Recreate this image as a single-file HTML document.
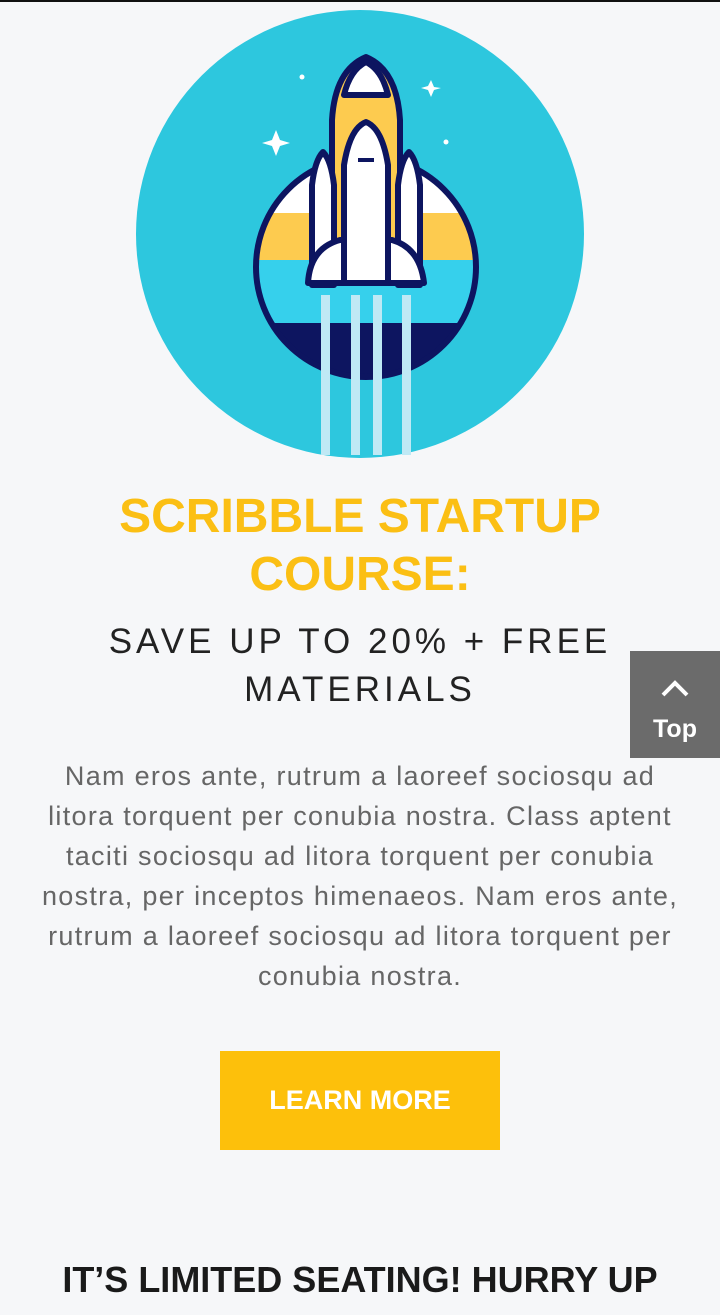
<!DOCTYPE html>
<html><head><meta charset="utf-8"><style>
body{margin:0;width:720px;height:1315px;overflow:hidden;background:#f6f7f9;font-family:"Liberation Sans",Arial,sans-serif;position:relative}
.t{position:absolute;left:0;width:720px;text-align:center}
h1{margin:0;font-size:48px;line-height:58px;color:#fbbf14;font-weight:bold;top:488px}
.sub{font-size:35px;line-height:48px;letter-spacing:4px;color:#222;top:618px}
.p{font-size:27px;letter-spacing:1.3px;line-height:40px;color:#666;top:756px;left:0;width:720px;white-space:nowrap}
.btn{position:absolute;left:220px;top:1051px;width:280px;height:99px;background:#fdc00b;color:#fff;font-weight:bold;font-size:27px;line-height:99px;text-align:center}
.top{position:absolute;left:630px;top:651px;width:90px;height:107px;background:#6b6b6b;color:#fff;font-size:25px;font-weight:bold;text-align:center}
.h2{font-size:36px;font-weight:bold;color:#1a1a1a;top:1258px;line-height:44px}
</style></head><body>
<div style="position:absolute;left:0;top:0;width:720px;height:2px;background:#111"></div>
<svg style="position:absolute;left:0;top:0" width="720" height="470">
<circle cx="360" cy="234" r="224" fill="#2dc7de"/>
<clipPath id="c"><circle cx="366" cy="267" r="110"/></clipPath>
<g clip-path="url(#c)">
<rect x="250" y="150" width="240" height="64" fill="#fff"/>
<rect x="250" y="213" width="240" height="48" fill="#fdcb4f"/>
<rect x="250" y="260" width="240" height="63" fill="#36d0ec"/>
<rect x="250" y="323" width="240" height="60" fill="#0d1560"/>
</g>
<circle cx="366" cy="267" r="110" fill="none" stroke="#0d1560" stroke-width="6"/>
<g stroke="#0d1560" stroke-width="6" stroke-linejoin="round">
<path d="M332 120 Q335 70 366 57 Q397 70 400 120 L400 250 L332 250 Z" fill="#fdcb4f"/>
<path d="M344 95 Q350 70 366 62 Q382 70 388 95 Z" fill="#fff"/>
<path d="M312 285 L312 185 Q315 160 323 152 Q331 160 334 185 L334 285 Z" fill="#fff"/>
<path d="M398 285 L398 185 Q401 160 409 152 Q417 160 420 185 L420 285 Z" fill="#fff"/>
<path d="M308 283 Q310 248 340 240 L392 240 Q420 248 424 283 Z" fill="#fff"/>
<path d="M344 283 L344 165 Q350 128 366 122 Q382 128 388 165 L388 283 Z" fill="#fff"/>
</g>
<path d="M358 160 L374 160" stroke="#0d1560" stroke-width="4"/>
<g fill="#bfe9f5">
<rect x="321" y="295" width="9" height="160"/><rect x="351" y="295" width="9" height="160"/><rect x="373" y="295" width="9" height="160"/><rect x="402" y="295" width="9" height="160"/>
</g>
<g fill="#fff"><path d="M276 130 L280 140 L290 143 L280 146 L276 156 L272 146 L262 143 L272 140Z"/><path d="M431 80 L434 87 L441 88 L434 90 L431 97 L428 90 L421 88 L428 86Z"/><circle cx="302" cy="77" r="2.5"/><circle cx="446" cy="142" r="2.5"/></g>
</svg>
<h1 class="t">SCRIBBLE STARTUP<br>COURSE:</h1>
<div class="t sub">SAVE UP TO 20% + FREE<br>MATERIALS</div>
<div class="t p">Nam eros ante, rutrum a laoreef sociosqu ad<br>litora torquent per conubia nostra. Class aptent<br>taciti sociosqu ad litora torquent per conubia<br>nostra, per inceptos himenaeos. Nam eros ante,<br>rutrum a laoreef sociosqu ad litora torquent per<br>conubia nostra.</div>
<div class="btn">LEARN MORE</div>
<div class="top"><svg width="90" height="60" style="display:block"><path d="M33 44 L45 32 L57 44" fill="none" stroke="#fff" stroke-width="4"/></svg><div style="margin-top:4px">Top</div></div>
<div class="t h2">IT’S LIMITED SEATING! HURRY UP</div>
</body></html>
